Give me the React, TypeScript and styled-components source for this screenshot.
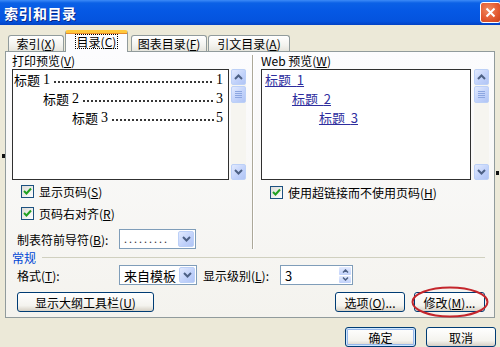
import styled, { createGlobalStyle, css } from "styled-components";

const GlobalStyle = createGlobalStyle`
  html, body {
    margin: 0;
    padding: 0;
    background: #ece9d8;
  }
  body {
    font-family: "Noto Sans CJK SC", "DejaVu Sans", sans-serif;
    font-size: 12px;
    color: #000;
  }
`;

const Window = styled.div`
  position: relative;
  width: 500px;
  height: 347px;
  overflow: hidden;
  background: #ece9d8;
  display: flex;
  flex-direction: column;
`;

const TitleBar = styled.div`
  height: 25px;
  flex: none;
  display: flex;
  align-items: center;
  justify-content: space-between;
  padding-left: 4px;
  background: linear-gradient(
    #3d8bf7 0,
    #0b61e6 3px,
    #0558e4 45%,
    #0453de 85%,
    #0342c4 100%
  );
`;

const Title = styled.span`
  color: #fff;
  font-weight: bold;
  font-size: 14px;
  letter-spacing: 0.5px;
  text-shadow: 1px 1px 0 #0a2a8a;
`;

const CloseButton = styled.div`
  width: 21px;
  height: 21px;
  margin-right: -1px;
  box-sizing: border-box;
  border: 1px solid #fff;
  border-radius: 3px;
  background: radial-gradient(circle at 40% 35%, #f08a60 0, #e2582f 60%, #c8421c 100%);
  display: flex;
  align-items: center;
  justify-content: center;
`;

const Body = styled.div`
  padding: 5px 0 0 5px;
  display: flex;
  flex-direction: column;
`;

const TabStrip = styled.div`
  height: 21px;
  display: flex;
  align-items: flex-end;
  padding-left: 3px;
  position: relative;
  z-index: 1;
`;

const Tab = styled.div<{ $w: number; $active?: boolean }>`
  width: ${(p) => p.$w}px;
  box-sizing: border-box;
  height: 16px;
  margin-right: 1px;
  border: 1px solid #919b9c;
  border-bottom: none;
  border-radius: 3px 3px 0 0;
  background: linear-gradient(#ffffff, #f3f3ef 60%, #e6e5dd);
  display: flex;
  align-items: center;
  justify-content: center;
  line-height: 14px;
  ${(p) =>
    p.$active &&
    css`
      height: 22px;
      margin-bottom: -1px;
      margin-right: 3px;
      border-top: 3px solid #ffc83c;
      box-shadow: inset 0 1px 0 #e68b2c;
      border-radius: 3px 3px 0 0;
      background: #fcfcfe;
      padding-bottom: 2px;
    `}
`;

const FocusText = styled.span`
  outline: 1px dotted #000;
  padding: 0 1px;
  line-height: 13px;
`;

const Panel = styled.div`
  width: 490px;
  height: 267px;
  box-sizing: border-box;
  border: 1px solid #919b9c;
  background: linear-gradient(#fcfcfe, #f4f3ee);
  display: flex;
  flex-direction: column;
  padding: 1px 5px 0 6px;
`;

const Columns = styled.div`
  display: flex;
  align-items: stretch;
`;

const Column = styled.div<{ $w: number }>`
  width: ${(p) => p.$w}px;
  flex: none;
  display: flex;
  flex-direction: column;
`;

const Divider = styled.div`
  width: 0;
  margin: 2px 7px 0 6px;
  border-left: 1px solid #aca899;
  border-right: 1px solid #fff;
`;

const GroupLabel = styled.div`
  height: 16px;
  line-height: 16px;
`;

const ListArea = styled.div`
  height: 111px;
  display: flex;
  gap: 2px;
`;

const ListBox = styled.div<{ $gap?: number }>`
  flex: 1 1 0;
  min-width: 0;
  box-sizing: border-box;
  border: 1px solid #303030;
  background: #fff;
  padding: 0 5px 0 1px;
  margin-right: ${(p) => p.$gap ?? 0}px;
  font-size: 13px;
`;

const Line = styled.div<{ $indent: number }>`
  display: flex;
  height: 19px;
  align-items: center;
  padding-left: ${(p) => p.$indent}px;
`;

const Heading = styled.span`
  white-space: pre;
  flex: none;
`;

const Num = styled.span`
  flex: none;
  font-family: "Liberation Serif", serif;
  font-size: 14px;
`;

/* dotted tab leader drawn as a repeating dot pattern */
const Leader = styled.span`
  flex: 1 1 0;
  min-width: 0;
  height: 4px;
  align-self: flex-end;
  margin: 0 2px 5px 3px;
  background-image: radial-gradient(circle, #333 0.7px, transparent 1.1px);
  background-size: 4px 4px;
  background-repeat: repeat-x;
`;

const WebLink = styled.span`
  color: #2e2e9e;
  text-decoration: underline;
  white-space: pre;
`;

const ScrollBar = styled.div`
  width: 15px;
  flex: none;
  display: flex;
  flex-direction: column;
  background: #f6f5f0;
`;

const ScrollButton = styled.div`
  width: 15px;
  height: 16px;
  box-sizing: border-box;
  border: 1px solid #bcd0f7;
  border-radius: 2px;
  background: linear-gradient(135deg, #e2eafe, #c0d1fa 60%, #b1c5f5);
  display: flex;
  align-items: center;
  justify-content: center;
`;

const Thumb = styled(ScrollButton)`
  margin-top: 1px;
  height: 17px;
`;

const Spacer = styled.div`
  flex: 1;
`;

const CheckRow = styled.div<{ $top: number }>`
  display: flex;
  align-items: center;
  gap: 5px;
  height: 13px;
  margin: ${(p) => p.$top}px 0 0 9px;
`;

const CheckBox = styled.div`
  width: 13px;
  height: 13px;
  box-sizing: border-box;
  border: 1px solid #1c5180;
  background: linear-gradient(135deg, #dcdcd7, #fff);
  display: flex;
  align-items: center;
  justify-content: center;
`;

const FieldRow = styled.div<{ $top?: number }>`
  display: flex;
  align-items: center;
  height: 20px;
  margin: ${(p) => p.$top ?? 0}px 0 0 5px;
`;

const FieldLabel = styled.span<{ $w: number; $pad?: number }>`
  width: ${(p) => p.$w}px;
  padding-left: ${(p) => p.$pad ?? 0}px;
  box-sizing: border-box;
  flex: none;
`;

const Combo = styled.div<{ $w: number }>`
  width: ${(p) => p.$w}px;
  height: 20px;
  box-sizing: border-box;
  border: 1px solid #7f9db9;
  background: #fff;
  display: flex;
  align-items: center;
  padding: 1px;
  font-size: 13px;
`;

const ComboText = styled.span`
  flex: 1;
  padding-left: 3px;
  white-space: pre;
`;

const Dots = styled(ComboText)`
  font-family: "Liberation Serif", serif;
  font-size: 12px;
  letter-spacing: 2px;
  color: #333;
`;

const DropButton = styled.div`
  width: 16px;
  height: 16px;
  border-radius: 2px;
  border: 1px solid #bcd0f7;
  box-sizing: border-box;
  background: linear-gradient(135deg, #e2eafe, #c0d1fa 60%, #b1c5f5);
  display: flex;
  align-items: center;
  justify-content: center;
`;

const SpinButtons = styled.div`
  width: 12px;
  height: 16px;
  display: flex;
  flex-direction: column;
  gap: 1px;
`;

const SpinHalf = styled.div`
  flex: 1;
  border-radius: 1px;
  background: linear-gradient(#e2eafe, #c0d1fa);
  display: flex;
  align-items: center;
  justify-content: center;
`;

const SectionHead = styled.div`
  height: 16px;
  display: flex;
  align-items: center;
  gap: 6px;
  color: #0046d5;
  margin-right: 4px;
`;

const SectionLine = styled.div`
  flex: 1;
  height: 0;
  border-top: 1px solid #d0d0bf;
`;

const ButtonRow = styled.div`
  display: flex;
  align-items: center;
  margin: 7px 0 0 5px;
`;

const Button = styled.button<{ $w: number; $default?: boolean }>`
  width: ${(p) => p.$w}px;
  height: 20px;
  flex: none;
  box-sizing: border-box;
  border: 1px solid #003c74;
  border-radius: 3px;
  background: linear-gradient(#ffffff, #f4f3ee 70%, #d6d0c5);
  font: inherit;
  color: #000;
  padding: 0;
  display: flex;
  align-items: center;
  justify-content: center;
  ${(p) =>
    p.$default &&
    css`
      box-shadow: inset 0 0 0 1px #cee7ff, inset 0 0 0 2px #98b8ea;
    `}
`;

const Marked = styled.div`
  position: relative;
  margin: 0 4px 0 9px;
`;

const Ellipse = styled.svg`
  position: absolute;
  left: -3px;
  top: -6px;
  pointer-events: none;
`;

const Footer = styled.div`
  display: flex;
  margin: 9px 0 0 340px;
  gap: 10px;
`;

const Pin = styled.div<{ $x: number; $y: number }>`
  position: absolute;
  left: ${(p) => p.$x}px;
  top: ${(p) => p.$y}px;
  width: 3px;
  height: 4px;
  background: #111;
`;

const Chevron = ({ up }: { up?: boolean }) => (
  <svg width="9" height="6" viewBox="0 0 9 6">
    <path
      d={up ? "M1 5 L4.5 1.5 L8 5" : "M1 1 L4.5 4.5 L8 1"}
      fill="none"
      stroke="#4d6185"
      strokeWidth="2"
    />
  </svg>
);

const Grip = () => (
  <svg width="7" height="8" viewBox="0 0 7 8">
    {[1, 3, 5, 7].map((y) => (
      <line key={y} x1="0" y1={y - 0.5} x2="7" y2={y - 0.5} stroke="#8ca6e0" />
    ))}
  </svg>
);

const Tick = () => (
  <svg width="9" height="9" viewBox="0 0 9 9">
    <path d="M1 4 L3.5 6.5 L8 1.5" fill="none" stroke="#21a121" strokeWidth="2" />
  </svg>
);

function Scroll() {
  return (
    <ScrollBar>
      <ScrollButton>
        <Chevron up />
      </ScrollButton>
      <Thumb>
        <Grip />
      </Thumb>
      <Spacer />
      <ScrollButton>
        <Chevron />
      </ScrollButton>
    </ScrollBar>
  );
}

function Check({ top, children }: { top: number; children: React.ReactNode }) {
  return (
    <CheckRow $top={top}>
      <CheckBox>
        <Tick />
      </CheckBox>
      <span>{children}</span>
    </CheckRow>
  );
}

const printLines = [
  { indent: 0, page: "1", n: "1" },
  { indent: 29, page: "3", n: "2" },
  { indent: 58, page: "5", n: "3" },
];

export default function App() {
  return (
    <Window>
      <GlobalStyle />
      <TitleBar>
        <Title>索引和目录</Title>
        <CloseButton>
          <svg width="11" height="11" viewBox="0 0 11 11">
            <path d="M1.5 1.5 L9.5 9.5 M9.5 1.5 L1.5 9.5" stroke="#fff" strokeWidth="2" />
          </svg>
        </CloseButton>
      </TitleBar>
      <Body>
        <TabStrip>
          <Tab $w={56}>
            索引(<u>X</u>)
          </Tab>
          <Tab $w={63} $active>
            <FocusText>
              目录(<u>C</u>)
            </FocusText>
          </Tab>
          <Tab $w={76}>
            图表目录(<u>F</u>)
          </Tab>
          <Tab $w={82}>
            引文目录(<u>A</u>)
          </Tab>
        </TabStrip>
        <Panel>
          <Columns>
            <Column $w={234}>
              <GroupLabel>
                打印预览(<u>V</u>)
              </GroupLabel>
              <ListArea>
                <ListBox>
                  {printLines.map((l) => (
                    <Line key={l.n} $indent={l.indent}>
                      <Heading>标题 </Heading>
                      <Num>{l.n}</Num>
                      <Leader />
                      <Num>{l.page}</Num>
                    </Line>
                  ))}
                </ListBox>
                <Scroll />
              </ListArea>
              <Check top={5}>
                显示页码(<u>S</u>)
              </Check>
              <Check top={9}>
                页码右对齐(<u>R</u>)
              </Check>
              <FieldRow $top={9}>
                <FieldLabel $w={102}>
                  制表符前导符(<u>B</u>):
                </FieldLabel>
                <Combo $w={77}>
                  <Dots>{"........."}</Dots>
                  <DropButton>
                    <Chevron />
                  </DropButton>
                </Combo>
              </FieldRow>
            </Column>
            <Divider />
            <Column $w={228}>
              <GroupLabel>
                Web 预览(<u>W</u>)
              </GroupLabel>
              <ListArea>
                <ListBox $gap={1}>
                  {printLines.map((l) => (
                    <Line key={l.n} $indent={l.indent * 0.93 + 2}>
                      <WebLink>标题  {l.n}</WebLink>
                    </Line>
                  ))}
                </ListBox>
                <Scroll />
              </ListArea>
              <Check top={6}>
                使用超链接而不使用页码(<u>H</u>)
              </Check>
            </Column>
          </Columns>
          <SectionHead>
            常规
            <SectionLine />
          </SectionHead>
          <FieldRow>
            <FieldLabel $w={102}>
              格式(<u>T</u>):
            </FieldLabel>
            <Combo $w={78}>
              <ComboText>来自模板</ComboText>
              <DropButton>
                <Chevron />
              </DropButton>
            </Combo>
            <FieldLabel $w={83} $pad={6}>
              显示级别(<u>L</u>):
            </FieldLabel>
            <Combo $w={73}>
              <ComboText>3</ComboText>
              <SpinButtons>
                <SpinHalf>
                  <svg width="7" height="4" viewBox="0 0 7 4">
                    <path d="M1 3.5 L3.5 1 L6 3.5" fill="none" stroke="#4d6185" strokeWidth="1.5" />
                  </svg>
                </SpinHalf>
                <SpinHalf>
                  <svg width="7" height="4" viewBox="0 0 7 4">
                    <path d="M1 0.5 L3.5 3 L6 0.5" fill="none" stroke="#4d6185" strokeWidth="1.5" />
                  </svg>
                </SpinHalf>
              </SpinButtons>
            </Combo>
          </FieldRow>
          <ButtonRow>
            <Button $w={137}>
              显示大纲工具栏(<u>U</u>)
            </Button>
            <Spacer />
            <Button $w={70}>
              选项(<u>O</u>)...
            </Button>
            <Marked>
              <Button $w={71}>
                修改(<u>M</u>)...
              </Button>
              <Ellipse width="78" height="32" viewBox="0 0 78 32">
                <ellipse cx="39" cy="16" rx="37.5" ry="14.5" fill="none" stroke="#c4262c" strokeWidth="2" />
              </Ellipse>
            </Marked>
          </ButtonRow>
        </Panel>
        <Footer>
          <Button $w={71} $default>
            确定
          </Button>
          <Button $w={70}>取消</Button>
        </Footer>
      </Body>
      <Pin $x={2} $y={154} />
      <Pin $x={496} $y={171} />
    </Window>
  );
}
